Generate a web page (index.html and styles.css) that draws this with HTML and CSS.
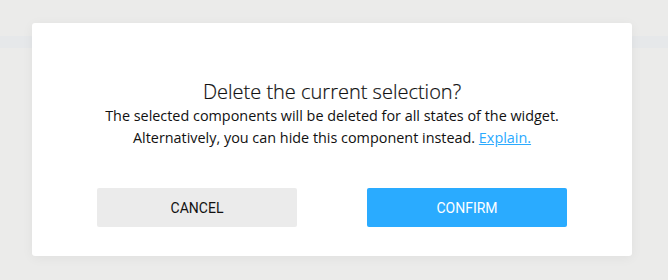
FILE: index.html
```html
<!DOCTYPE html>
<html lang="en">
<head>
  <meta charset="UTF-8">
  <title>Delete selection</title>
  <link rel="stylesheet" href="styles.css">
</head>
<body>

<div class="backdrop">
  <div class="strip"></div>

  <!-- Confirm dialog -->
  <div class="dialog">
    <h2>Delete the current selection?</h2>
    <p>The selected components will be deleted for all states of the widget.<br>
      Alternatively, you can hide this component instead. <a href="#">Explain.</a></p>
    <div class="actions">
      <button class="cancel">CANCEL</button>
      <button class="confirm">CONFIRM</button>
    </div>
  </div>
</div>

</body>
</html>
```

FILE: styles.css
```css
body {
  margin: 0;
  font-family: "Open Sans", Arial, sans-serif;
  background: #ebebea;
}
.backdrop {
  width: 668px;
  height: 280px;
  padding-top: 23px;
  box-sizing: border-box;
  background: #ebebea;
  overflow: hidden;
}
.strip {
  position: absolute;
  left: 0;
  top: 36px;
  width: 668px;
  height: 12px;
  background: #e6e8ea;
}
.dialog {
  position: relative;
  width: 600px;
  height: 233px;
  margin-left: 32px;
  background: white;
  border-radius: 3px;
  box-shadow: 0px 2px 12px rgba(0, 0, 0, 0.05);
  text-align: center;
  box-sizing: border-box;
  padding-top: 56px;
}
h2 {
  margin: 0;
  font-size: 20px;
  font-weight: 300;
  color: #111;
  line-height: 26px;
  -webkit-text-stroke: 0.2px #111;
}
p {
  margin: 0;
  font-size: 14.4px;
  line-height: 22px;
  color: #111;
}
a {
  color: #2aaaff;
}
.actions {
  display: flex;
  justify-content: center;
  gap: 70px;
  margin-top: 39px;
}
button {
  width: 200px;
  height: 39px;
  border: none;
  border-radius: 2px;
  font-family: Roboto, Arial, sans-serif;
  font-size: 14px;
  cursor: pointer;
}
.cancel {
  background: #ebebeb;
  color: #111;
}
.confirm {
  background: #2aabff;
  color: white;
}
```
